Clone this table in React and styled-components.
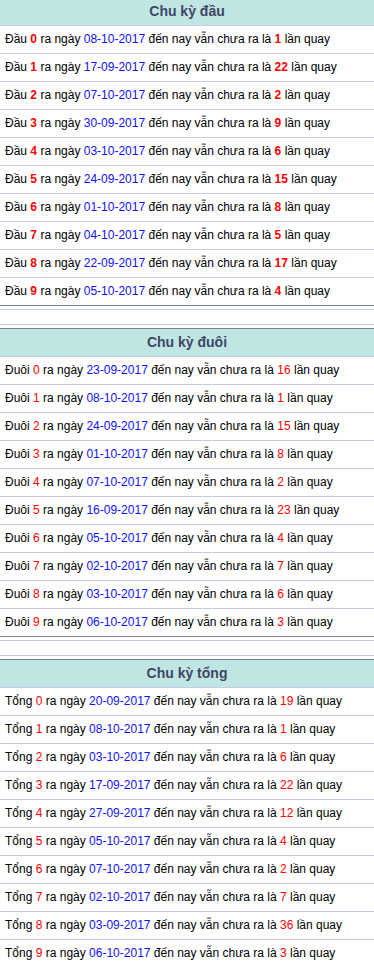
import React from 'react';
import styled, { createGlobalStyle } from 'styled-components';

const GlobalStyle = createGlobalStyle`
  body {
    margin: 0;
    background: #fff;
    font-family: Arial, "Liberation Sans", sans-serif;
    overflow: hidden;
  }
`;

const Page = styled.div`
  margin-top: -3px;
  width: 100%;
`;

const Section = styled.div`
  border-top: 1px solid #7b7f8f;
  border-bottom: 1px solid #7b7f8f;
`;

const Heading = styled.div`
  height: 27px;
  line-height: 27px;
  background: #c0e6e4;
  color: #3e4766;
  font-weight: bold;
  font-size: 14px;
  text-align: center;
  border-bottom: 1px solid #c5cde6;
`;

const Row = styled.div`
  height: 27px;
  line-height: 27px;
  padding-left: 5px;
  font-size: 12px;
  color: #000;
  white-space: nowrap;
  border-bottom: 1px solid #c5cde6;
  &:last-child {
    border-bottom: 0;
  }
`;

const Num = styled.span`
  color: #ff0000;
  font-weight: ${(p) => (p.$bold ? 'bold' : 'normal')};
`;

const Date = styled.span`
  color: #1010ff;
`;

const Spacer = styled.div`
  height: 14px;
  margin: 3px 0;
  border-top: 1px solid #c5cde6;
  border-bottom: 1px solid #c5cde6;
`;

const sections = [
  {
    title: 'Chu kỳ đầu',
    label: 'Đầu',
    bold: true,
    rows: [
      ['08-10-2017', 1],
      ['17-09-2017', 22],
      ['07-10-2017', 2],
      ['30-09-2017', 9],
      ['03-10-2017', 6],
      ['24-09-2017', 15],
      ['01-10-2017', 8],
      ['04-10-2017', 5],
      ['22-09-2017', 17],
      ['05-10-2017', 4],
    ],
  },
  {
    title: 'Chu kỳ đuôi',
    label: 'Đuôi',
    rows: [
      ['23-09-2017', 16],
      ['08-10-2017', 1],
      ['24-09-2017', 15],
      ['01-10-2017', 8],
      ['07-10-2017', 2],
      ['16-09-2017', 23],
      ['05-10-2017', 4],
      ['02-10-2017', 7],
      ['03-10-2017', 6],
      ['06-10-2017', 3],
    ],
  },
  {
    title: 'Chu kỳ tổng',
    label: 'Tổng',
    rows: [
      ['20-09-2017', 19],
      ['08-10-2017', 1],
      ['03-10-2017', 6],
      ['17-09-2017', 22],
      ['27-09-2017', 12],
      ['05-10-2017', 4],
      ['07-10-2017', 2],
      ['02-10-2017', 7],
      ['03-09-2017', 36],
      ['06-10-2017', 3],
    ],
  },
];

function App() {
  return (
    <>
      <GlobalStyle />
      <Page>
        {sections.map(({ title, label, bold, rows }, i) => (
          <React.Fragment key={title}>
            {i > 0 && <Spacer />}
            <Section>
              <Heading>{title}</Heading>
              {rows.map(([date, count], n) => (
                <Row key={`${label}-${n}`}>
                  {label} <Num $bold={bold}>{n}</Num> ra ngày{' '}
                  <Date>{date}</Date> đến nay vẫn chưa ra là{' '}
                  <Num $bold={bold}>{count}</Num> lần quay
                </Row>
              ))}
            </Section>
          </React.Fragment>
        ))}
      </Page>
    </>
  );
}

export default App;
